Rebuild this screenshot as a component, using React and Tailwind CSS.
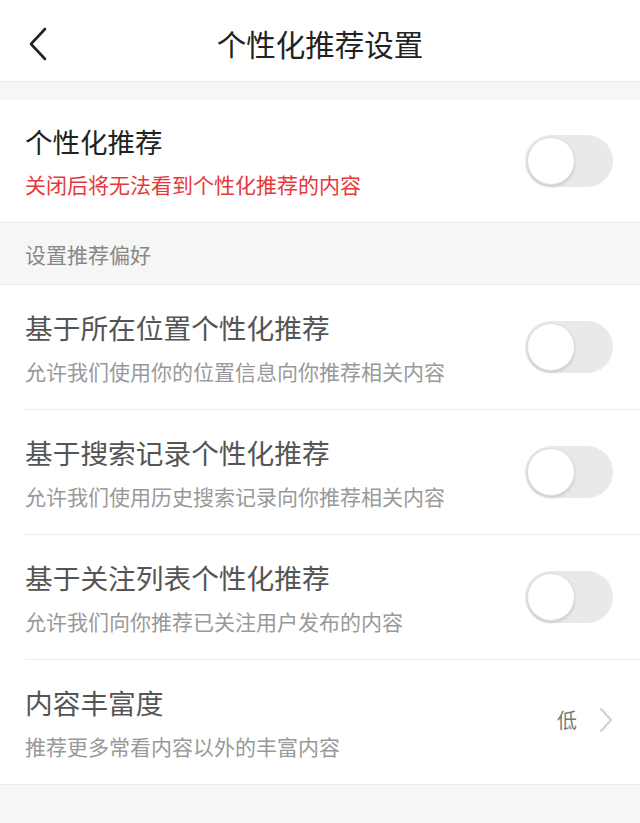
import React, { useState } from 'react';

const font = { fontFamily: '"Noto Sans CJK SC", "Noto Sans", sans-serif' };

const Toggle = ({ on, onChange }) => (
  <button
    type="button"
    onClick={onChange}
    className={`relative w-[88px] h-[52px] rounded-full shrink-0 ${on ? 'bg-[#e5383b]' : 'bg-[#e9e9e9]'}`}
  >
    <span
      className={`absolute top-[2px] w-[48px] h-[48px] rounded-full bg-white border border-[#dcdcdc] shadow-[0_2px_3px_rgba(0,0,0,0.12)] ${on ? 'left-[38px]' : 'left-[2px]'}`}
    />
  </button>
);

const prefs = [
  { key: 'location', title: '基于所在位置个性化推荐', desc: '允许我们使用你的位置信息向你推荐相关内容' },
  { key: 'search', title: '基于搜索记录个性化推荐', desc: '允许我们使用历史搜索记录向你推荐相关内容' },
  { key: 'follow', title: '基于关注列表个性化推荐', desc: '允许我们向你推荐已关注用户发布的内容' },
];

const App = () => {
  const [main, setMain] = useState(false);
  const [opts, setOpts] = useState({ location: false, search: false, follow: false });

  return (
    <div className="min-h-[823px] bg-[#f6f6f6]" style={font}>
      {/* header */}
      <div className="h-[82px] bg-white border-b border-[#ececec] flex items-center relative">
        <button type="button" className="absolute left-[26px] top-[26px] w-[24px] h-[36px]">
          <svg width="24" height="36" viewBox="0 0 24 36" fill="none">
            <path d="M19 3 L5 18 L19 33" stroke="#222" strokeWidth="2.6" strokeLinecap="round" strokeLinejoin="round" />
          </svg>
        </button>
        <h1 className="w-full text-center text-[29.5px] leading-[40px] text-[#222] mt-[5px]">个性化推荐设置</h1>
      </div>

      <div className="h-[18px]" />

      {/* main switch */}
      <div className="h-[123px] bg-white border-b border-[#ececec] flex items-center justify-between pl-[25px] pr-[27px]">
        <div className="flex flex-col gap-[11px] -mt-[1px]">
          <div className="text-[27.5px] leading-[36px] text-[#222]">个性化推荐</div>
          <div className="text-[21px] leading-[28px] text-[#e5383b]">关闭后将无法看到个性化推荐的内容</div>
        </div>
        <Toggle on={main} onChange={() => setMain(v => !v)} />
      </div>

      {/* section header */}
      <div className="h-[62px] flex items-center pl-[25px] border-b border-[#ececec]">
        <span className="text-[21px] leading-[28px] text-[#888]">设置推荐偏好</span>
      </div>

      {/* preference rows */}
      <div className="bg-white border-b border-[#ececec]">
        {prefs.map(p => (
          <div key={p.key} className="pl-[25px]">
            <div className="h-[125px] flex items-center justify-between pr-[27px] border-b border-[#ececec]">
              <div className="flex flex-col gap-[12px] -mt-[1px]">
                <div className="text-[27.7px] leading-[36px] text-[#555]">{p.title}</div>
                <div className="text-[21px] leading-[28px] text-[#999]">{p.desc}</div>
              </div>
              <Toggle on={opts[p.key]} onChange={() => setOpts(o => ({ ...o, [p.key]: !o[p.key] }))} />
            </div>
          </div>
        ))}
        <div className="h-[124px] flex items-center justify-between pl-[25px] pr-[27px]">
          <div className="flex flex-col gap-[12px] -mt-[1px]">
            <div className="text-[27.7px] leading-[36px] text-[#555]">内容丰富度</div>
            <div className="text-[21px] leading-[28px] text-[#999]">推荐更多常看内容以外的丰富内容</div>
          </div>
          <div className="flex items-center gap-[22px] -mt-[4px]">
            <span className="text-[20px] leading-[28px] text-[#777]">低</span>
            <svg width="14" height="26" viewBox="0 0 14 26" fill="none">
              <path d="M2 2 L12 13 L2 24" stroke="#cfcfcf" strokeWidth="2" strokeLinecap="round" strokeLinejoin="round" />
            </svg>
          </div>
        </div>
      </div>
    </div>
  );
};

export default App;
